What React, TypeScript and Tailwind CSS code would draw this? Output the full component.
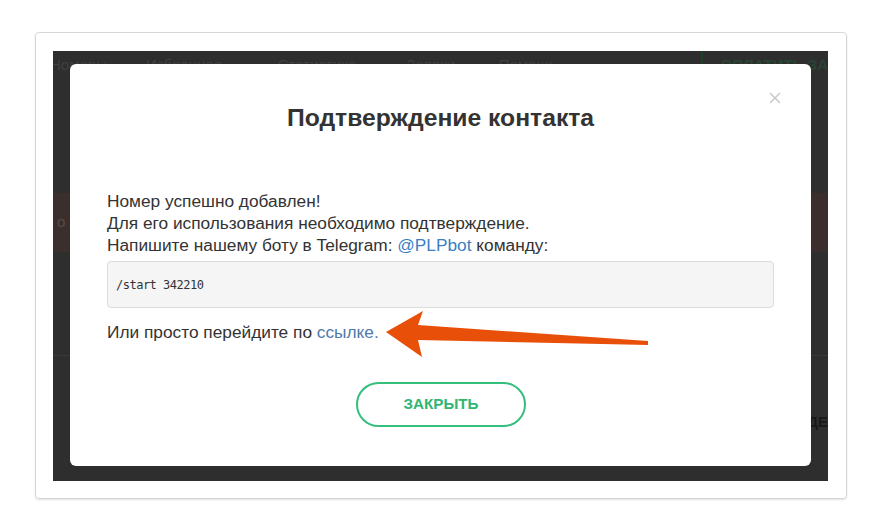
import { X } from 'lucide-react'

const SANS = { fontFamily: '"Liberation Sans", Arial, sans-serif' }

function BackdropPage() {
  // the page behind the modal, dimmed by the overlay
  return (
    <div className="flex flex-col h-full text-[#404040]" style={SANS}>
      <div className="flex items-start h-[26px] pt-[5px] text-[15px] leading-[17px] whitespace-nowrap">
        <span className="ml-[-3px] w-[97px]">Номеры</span>
        <span className="w-[133px]">Избранное</span>
        <span className="w-[130px]">Статистика</span>
        <span className="w-[93px]">Заявки</span>
        <span className="w-[204px]">Помощь</span>
        <span className="w-[2px] h-[22px] -mt-[5px] bg-[#1d4029]" />
        <span className="ml-[18px] font-bold text-[#284433]">ОПЛАТИТЬ ЗА</span>
      </div>
      <div className="h-[116px]" />
      <div className="h-[59px] bg-[#3a2f2d] flex items-center text-[#5a4a45] text-[15px]">
        <span className="ml-[4px]">о</span>
      </div>
      <div className="h-[103px]" />
      <div className="h-px bg-[#3a3a3a]" />
      <div className="h-[57px]" />
      <div className="flex justify-end text-[#181818] font-bold text-[15px] leading-[18px] whitespace-nowrap">
        <span>ДЕ</span>
      </div>
    </div>
  )
}

function ConfirmModal() {
  return (
    <div
      className="absolute left-[17px] top-[13px] w-[741px] h-[402px] bg-white rounded-[6px] text-[#333]"
      style={SANS}
    >
      <button className="absolute right-[27px] top-[25px] text-[#c8c8c8]" aria-label="Close">
        <X size={18} strokeWidth={2} />
      </button>

      <h3 className="pt-[40px] text-center text-[24.7px] leading-[28px] font-bold text-[#333]">
        Подтверждение контакта
      </h3>

      <div className="px-[37px] mt-[58px] text-[17.3px] leading-[22px]">
        <p>Номер успешно добавлен!</p>
        <p>Для его использования необходимо подтверждение.</p>
        <p>
          Напишите нашему боту в Telegram: <a className="text-[#3a7fc4]">@PLPbot</a> команду:
        </p>

        <div
          className="mt-[5px] h-[47px] flex items-center px-[8px] bg-[#f5f5f5] border border-[#dcdcdc] rounded-[4px] text-[12px] tracking-[-0.5px] text-[#333]"
          style={{ fontFamily: '"DejaVu Sans Mono", "Liberation Mono", monospace' }}
        >
          /start 342210
        </div>

        <p className="mt-[13px]">
          Или просто перейдите по <a className="text-[#4d7aa8]">ссылке.</a>
        </p>
      </div>

      <div className="flex justify-center mt-[39px] pl-[1px]">
        <button className="w-[170px] h-[45px] rounded-full border-2 border-[#35bf7d] text-[#2eb673] text-[15.2px] font-bold">
          ЗАКРЫТЬ
        </button>
      </div>
    </div>
  )
}

export default function App() {
  return (
    <div className="relative w-[886px] h-[528px] bg-white pt-[32px] pl-[35px]">
      <div className="w-[812px] h-[467px] border border-[#d6d6d6] rounded-[4px] shadow-[0_1px_2px_rgba(0,0,0,0.12)] pt-[18px] pl-[17px]">
        <div className="relative w-[775px] h-[430px] bg-[#2e2e2e] overflow-hidden">
          <BackdropPage />
          <ConfirmModal />
        </div>
      </div>

      {/* annotation arrow */}
      <svg className="absolute inset-0 pointer-events-none" width="886" height="528" viewBox="0 0 886 528">
        <polygon
          points="386,332 423,311 418,325 648,341 648,345 418,340 422,357"
          fill="#e8500a"
        />
      </svg>
    </div>
  )
}
